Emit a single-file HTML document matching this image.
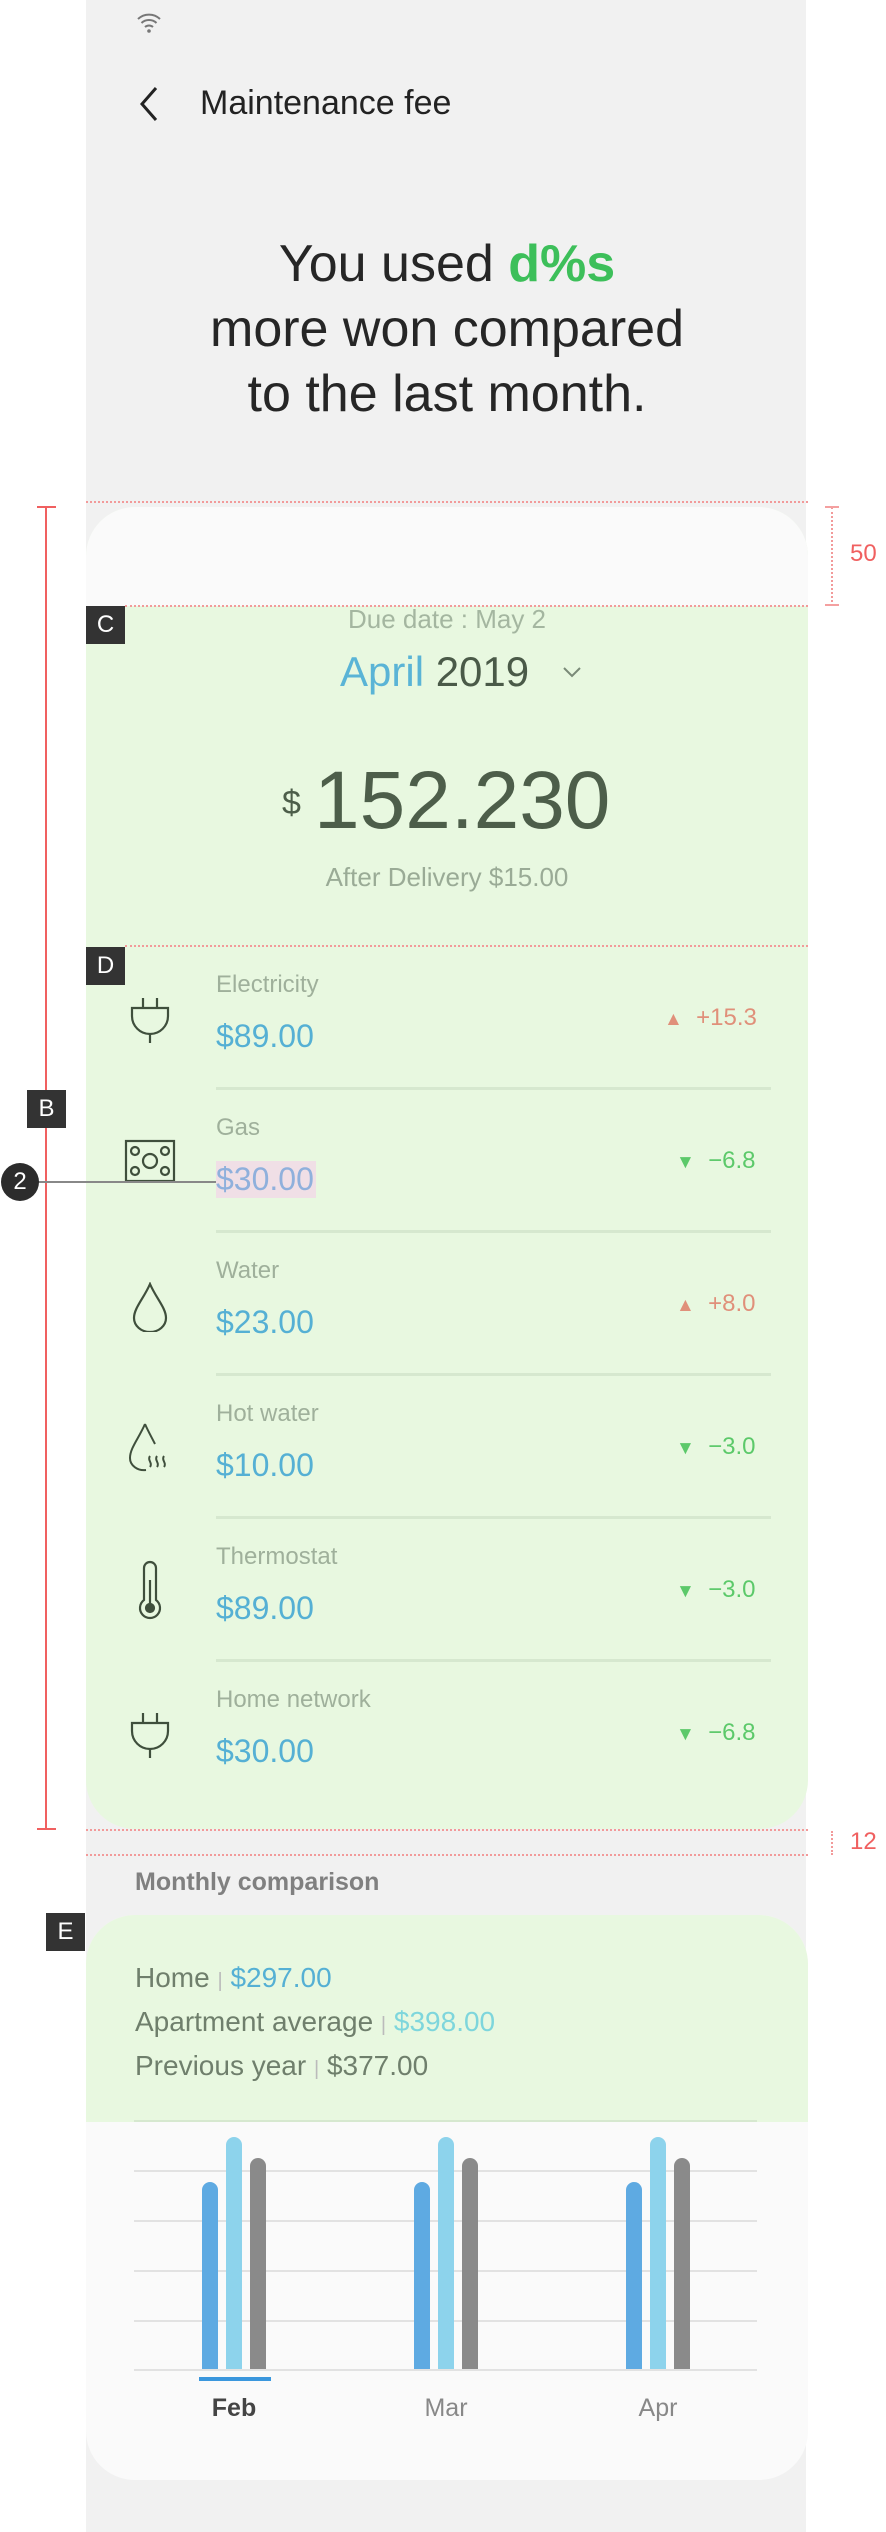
<!DOCTYPE html>
<html><head><meta charset="utf-8"><style>
*{margin:0;padding:0;box-sizing:border-box}
body{width:886px;height:2532px;background:#fff;position:relative;overflow:hidden;font-family:"Liberation Sans",sans-serif}
.a{position:absolute;white-space:nowrap}
.phone{position:absolute;left:86px;top:0;width:720px;height:2532px;background:#f1f1f1}
.lbl{position:absolute;background:#333;color:#fff;font-size:24px;text-align:center;line-height:38px;width:39px;height:38px}
.dot{position:absolute;border-top:2px dotted #f29a9a;height:0}
.row .l{color:#9fb09b;font-size:24px}
.row .v{color:#55b0d4;font-size:32px}
.up{color:#e0907a;font-size:24px}
.dn{color:#5cc96a;font-size:24px}
.div{position:absolute;left:216px;width:555px;height:3px;background:#d6e8cf}
.grid{position:absolute;left:134px;width:623px;height:2px;background:#e2e2e2}
.bar{position:absolute;width:16px;border-radius:8px 8px 0 0}
.t{font-size:19px}
</style></head><body>
<div class="phone"></div>
<svg class="a" style="left:136px;top:12px" width="26" height="22" viewBox="0 0 26 22"><path d="M2 7a16 16 0 0 1 22 0M5.5 11a11 11 0 0 1 15 0M9 15a6 6 0 0 1 8 0" fill="none" stroke="#777" stroke-width="2"/><circle cx="13" cy="19" r="1.8" fill="#777"/></svg>
<svg class="a" style="left:136px;top:86px" width="26" height="36" viewBox="0 0 26 36"><path d="M20 2L6 18l14 16" fill="none" stroke="#222" stroke-width="3"/></svg>
<div class="a" style="left:200px;top:84px;font-size:34px;color:#222">Maintenance fee</div>
<div class="a" style="left:86px;width:722px;top:232px;text-align:center;font-size:52px;line-height:65px;color:#262626;white-space:normal">You used <b style="color:#3dbf5a">d%s</b><br>more won compared<br>to the last month.</div>

<div class="a" style="left:86px;top:507px;width:722px;height:1322px;background:#e8f8e0;border-radius:49px;overflow:hidden"><div style="height:99px;background:#fafafa"></div></div>
<div class="dot" style="left:86px;top:501px;width:722px"></div>
<div class="dot" style="left:125px;top:605px;width:683px"></div>
<div class="dot" style="left:125px;top:945px;width:683px"></div>
<div class="dot" style="left:86px;top:1829px;width:722px"></div>
<div class="dot" style="left:86px;top:1854px;width:722px"></div>
<div class="a" style="left:45px;top:507px;width:2px;height:1322px;background:#f06060"></div>
<div class="a" style="left:37px;top:506px;width:19px;height:2px;background:#f06060"></div>
<div class="a" style="left:37px;top:1828px;width:19px;height:2px;background:#f06060"></div>
<div class="a" style="left:831px;top:507px;height:99px;border-left:2px dotted #f29a9a"></div>
<div class="a" style="left:825px;top:506px;width:14px;height:2px;background:#f4a0a0"></div>
<div class="a" style="left:825px;top:604px;width:14px;height:2px;background:#f4a0a0"></div>
<div class="a" style="left:850px;top:540px;font-size:24px;color:#f06060">50</div>
<div class="a" style="left:831px;top:1831px;height:24px;border-left:2px dotted #f29a9a"></div>
<div class="a" style="left:850px;top:1828px;font-size:24px;color:#f06060">12</div>
<div class="lbl" style="left:86px;top:606px">C</div>
<div class="lbl" style="left:86px;top:947px">D</div>
<div class="lbl" style="left:27px;top:1090px">B</div>
<div class="lbl" style="left:46px;top:1913px">E</div>

<div class="a" style="left:86px;width:722px;top:604px;text-align:center;font-size:26px;color:#a4b6a0">Due date : May 2</div>
<div class="a" style="left:340px;top:648px;font-size:42px;color:#4a5a48"><span style="color:#5ab4d6">April</span> 2019</div>
<svg class="a" style="left:562px;top:665px" width="20" height="14" viewBox="0 0 20 14"><path d="M2 3l8 8 8-8" fill="none" stroke="#7a8a78" stroke-width="2"/></svg>
<div class="a" style="left:282px;top:784px;font-size:34px;color:#4d5e4a">$</div>
<div class="a" style="left:314px;top:754px;font-size:82px;color:#4d5e4a">152.230</div>
<div class="a" style="left:86px;width:722px;top:862px;text-align:center;font-size:26px;color:#9aab96">After Delivery $15.00</div>

<div class="row">
<div class="a l" style="left:216px;top:971px">Electricity</div><div class="a v" style="left:216px;top:1018px">$89.00</div>
<div class="a up" style="left:664px;top:1004px"><span class="t">▲</span>&nbsp; +15.3</div>
<div class="div" style="top:1087px"></div>
<div class="a l" style="left:216px;top:1114px">Gas</div><div class="a v" style="left:216px;top:1161px;background:#f0dfe6;color:#8fb0dc;padding:0 2px 0 0">$30.00</div>
<div class="a dn" style="left:676px;top:1147px"><span class="t">▼</span>&nbsp; −6.8</div>
<div class="div" style="top:1230px"></div>
<div class="a l" style="left:216px;top:1257px">Water</div><div class="a v" style="left:216px;top:1304px">$23.00</div>
<div class="a up" style="left:676px;top:1290px"><span class="t">▲</span>&nbsp; +8.0</div>
<div class="div" style="top:1373px"></div>
<div class="a l" style="left:216px;top:1400px">Hot water</div><div class="a v" style="left:216px;top:1447px">$10.00</div>
<div class="a dn" style="left:676px;top:1433px"><span class="t">▼</span>&nbsp; −3.0</div>
<div class="div" style="top:1516px"></div>
<div class="a l" style="left:216px;top:1543px">Thermostat</div><div class="a v" style="left:216px;top:1590px">$89.00</div>
<div class="a dn" style="left:676px;top:1576px"><span class="t">▼</span>&nbsp; −3.0</div>
<div class="div" style="top:1659px"></div>
<div class="a l" style="left:216px;top:1686px">Home network</div><div class="a v" style="left:216px;top:1733px">$30.00</div>
<div class="a dn" style="left:676px;top:1719px"><span class="t">▼</span>&nbsp; −6.8</div>
</div>
<svg class="a" style="left:128px;top:996px" width="44" height="48" viewBox="0 0 44 48" fill="none" stroke="#3f4f3c" stroke-width="2.2"><path d="M15 2v10M29 2v10M4 12h36v8a18 18 0 0 1-36 0zM22 38v9"/></svg>
<svg class="a" style="left:124px;top:1139px" width="52" height="44" viewBox="0 0 52 44" fill="none" stroke="#3f4f3c" stroke-width="2.2"><rect x="2" y="2" width="48" height="40"/><circle cx="11" cy="12" r="4"/><circle cx="41" cy="12" r="4"/><circle cx="11" cy="32" r="4"/><circle cx="41" cy="32" r="4"/><circle cx="26" cy="22" r="7"/></svg>
<svg class="a" style="left:132px;top:1282px" width="36" height="50" viewBox="0 0 36 50" fill="none" stroke="#3f4f3c" stroke-width="2.2"><path d="M18 2C12 16 2 26 2 36a16 14 0 0 0 32 0C34 26 24 16 18 2z"/></svg>
<svg class="a" style="left:126px;top:1422px" width="48" height="52" viewBox="0 0 48 52" fill="none" stroke="#3f4f3c" stroke-width="2"><path d="M19 2C13 16 4 26 4 36a14 12 0 0 0 16 12M24 34c-3 4 3 7 0 11M31 34c-3 4 3 7 0 11M38 34c-3 4 3 7 0 11M19 2c3 7 7 14 10 20"/></svg>
<svg class="a" style="left:134px;top:1560px" width="32" height="60" viewBox="0 0 32 60" fill="none" stroke="#3f4f3c" stroke-width="2.2"><path d="M10 40V8a6 6 0 0 1 12 0v32a10 10 0 1 1-12 0z"/><circle cx="16" cy="48" r="4" fill="#3f4f3c"/><path d="M16 46V20"/></svg>
<svg class="a" style="left:128px;top:1711px" width="44" height="48" viewBox="0 0 44 48" fill="none" stroke="#3f4f3c" stroke-width="2.2"><path d="M15 2v10M29 2v10M4 12h36v8a18 18 0 0 1-36 0zM22 38v9"/></svg>
<div class="a" style="left:20px;top:1181px;width:196px;height:2px;background:#888"></div>
<div class="a" style="left:1px;top:1163px;width:38px;height:38px;border-radius:50%;background:#2c2c2c;color:#fff;font-size:24px;text-align:center;line-height:38px">2</div>

<div class="a" style="left:135px;top:1868px;font-size:25px;font-weight:bold;color:#808080">Monthly comparison</div>
<div class="a" style="left:86px;top:1915px;width:722px;height:565px;background:#fafafa;border-radius:49px;overflow:hidden"><div style="height:207px;background:#e8f8e0"></div></div>
<div class="a" style="left:135px;top:1962px;font-size:28px;color:#6f7f6c">Home <span style="color:#bbb;font-size:20px">|</span> <span style="color:#55b0d4">$297.00</span></div>
<div class="a" style="left:135px;top:2006px;font-size:28px;color:#6f7f6c">Apartment average <span style="color:#bbb;font-size:20px">|</span> <span style="color:#7ed6dc">$398.00</span></div>
<div class="a" style="left:135px;top:2050px;font-size:28px;color:#6f7f6c">Previous year <span style="color:#bbb;font-size:20px">|</span> $377.00</div>
<div class="grid" style="top:2120px;background:#d6e8cf"></div>
<div class="grid" style="top:2170px"></div>
<div class="grid" style="top:2220px"></div>
<div class="grid" style="top:2270px"></div>
<div class="grid" style="top:2320px"></div>
<div class="bar" style="left:202px;top:2182px;height:188px;background:#5eaae2"></div>
<div class="bar" style="left:226px;top:2137px;height:233px;background:#8dd3ec"></div>
<div class="bar" style="left:250px;top:2158px;height:212px;background:#8a8a8a"></div>
<div class="bar" style="left:414px;top:2182px;height:188px;background:#5eaae2"></div>
<div class="bar" style="left:438px;top:2137px;height:233px;background:#8dd3ec"></div>
<div class="bar" style="left:462px;top:2158px;height:212px;background:#8a8a8a"></div>
<div class="bar" style="left:626px;top:2182px;height:188px;background:#5eaae2"></div>
<div class="bar" style="left:650px;top:2137px;height:233px;background:#8dd3ec"></div>
<div class="bar" style="left:674px;top:2158px;height:212px;background:#8a8a8a"></div>
<div class="grid" style="top:2369px"></div>
<div class="a" style="left:199px;top:2377px;width:72px;height:4px;background:#3a97dd"></div>
<div class="a" style="left:198px;width:72px;top:2394px;text-align:center;font-size:25px;font-weight:bold;color:#444">Feb</div>
<div class="a" style="left:410px;width:72px;top:2394px;text-align:center;font-size:25px;color:#888">Mar</div>
<div class="a" style="left:622px;width:72px;top:2394px;text-align:center;font-size:25px;color:#888">Apr</div>
</body></html>
